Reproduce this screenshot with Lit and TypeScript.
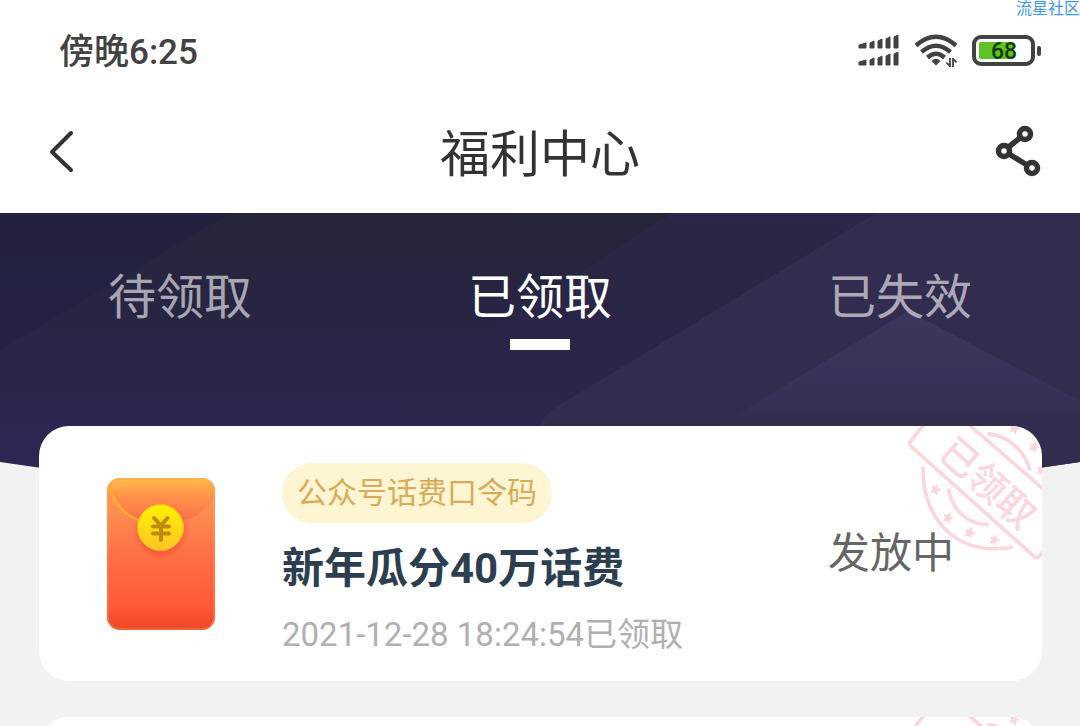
import { LitElement, html, css, svg, nothing } from "lit";
import { customElement, property, state } from "lit/decorators.js";

interface Reward {
  kind: string;
  title: string;
  time: string;
  status: string;
}

const REWARDS: (Reward | null)[] = [
  { kind: "公众号话费口令码", title: "新年瓜分40万话费", time: "2021-12-28 18:24:54已领取", status: "发放中" },
  null,
];

@customElement("status-bar")
class StatusBar extends LitElement {
  static styles = css`
    :host { display: block; position: relative; }
    .bar { display: flex; align-items: center; justify-content: space-between; box-sizing: border-box; height: 100px; padding: 2px 38px 0 59px; color: #424242; }
    .time { font-size: 35px; line-height: 40px; font-weight: 500; padding-top: 4px; }
    .icons { display: flex; align-items: center; gap: 14px; }
    .icons svg { display: block; }
    .mark { position: absolute; top: 0; right: 0; font-size: 16px; line-height: 18px; color: #3f97ee; white-space: nowrap; }
    .level { font: 500 23px Roboto, "Noto Sans CJK SC", sans-serif; }
  `;
  render() {
    const bars = [0, 1, 2, 3, 4];
    return html`
      <div class="bar">
        <span class="time">傍晚6:25</span>
        <div class="icons">
          <svg width="42" height="34" viewBox="0 0 42 34" fill="#424242" stroke="#424242" stroke-linejoin="round" aria-hidden="true">
            ${[15, 32].map((base) => bars.map((i) => {
              const x = i === 0 ? 1 : 4 + i * 8;
              const w = i === 0 ? 7 : 4;
              const top = base - 5 - 2 * i;
              return svg`<path d="M${x} ${top + 1} L${x + w} ${top - 1} V${base - 1} H${x} Z" />`;
            }))}
          </svg>
          <svg width="44" height="34" viewBox="0 0 44 34" fill="none" stroke="#424242" stroke-width="4.4" aria-hidden="true">
            <path d="M2 11.5 Q22 -6 42 11.5" />
            <path d="M7.5 18 Q22 5.500 36.500 18" />
            <path d="M13.500 23.500 Q22 16 30.500 23.500" />
            <path d="M17.500 27 Q22 22.500 26.500 27 L22 31.500 Z" fill="#424242" stroke="none" />
            <path d="M36 24 V33 M36 32.500 L32.500 28.500 M39 33 V24 M39 24.500 L42.500 28.500" stroke-width="1.800" />
          </svg>
          <svg width="70" height="32" viewBox="0 0 70 32" aria-hidden="true">
            <rect x="2" y="2" width="59" height="27" rx="7" fill="none" stroke="#424242" stroke-width="4" />
            <rect x="7" y="7" width="34" height="17" rx="2" fill="#5ec424" />
            <rect x="65" y="11" width="4" height="10" rx="2" fill="#424242" />
            <text class="level" x="32" y="24" text-anchor="middle" fill="#173a0c">68</text>
          </svg>
        </div>
      </div>
      <span class="mark">流星社区</span>
    `;
  }
}

@customElement("red-packet")
class RedPacket extends LitElement {
  static styles = css`
    :host { display: block; }
    svg { display: block; }
  `;
  render() {
    return html`
      <svg width="108" height="152" viewBox="0 0 108 152" aria-hidden="true">
        <defs>
          <linearGradient id="body" x1="0" y1="0" x2="0" y2="1">
            <stop offset="0" stop-color="#ffa04e" />
            <stop offset="0.2" stop-color="#ff9050" />
            <stop offset="0.5" stop-color="#ff7048" />
            <stop offset="0.85" stop-color="#ff5838" />
            <stop offset="0.94" stop-color="#f44c2c" />
            <stop offset="1" stop-color="#ee4a26" />
          </linearGradient>
          <linearGradient id="flap" x1="0" y1="0" x2="0" y2="1">
            <stop offset="0" stop-color="#ffbb4c" />
            <stop offset="0.35" stop-color="#ff964b" />
            <stop offset="1" stop-color="#ff6b46" />
          </linearGradient>
          <linearGradient id="coin" x1="0" y1="0" x2="0" y2="1">
            <stop offset="0" stop-color="#fff200" />
            <stop offset="1" stop-color="#ffc524" />
          </linearGradient>
          <radialGradient id="glow">
            <stop offset="0.75" stop-color="#f4502a" stop-opacity="0.6" />
            <stop offset="1" stop-color="#f4502a" stop-opacity="0" />
          </radialGradient>
          <clipPath id="shape"><rect width="108" height="152" rx="13" /></clipPath>
        </defs>
        <g clip-path="url(#shape)">
          <rect width="108" height="152" fill="url(#body)" />
          <path d="M0 0 H108 V16 C101 36 78 46 54 46 C30 46 7 36 0 12 Z" fill="url(#flap)" />
          <path d="M0 6 C5 28 17 39 34 44 L32 41 C18 36 8 24 3 6 Z" fill="#ffab3a" />
          <rect width="108" height="152" rx="13" fill="none" stroke="#ff9a58" stroke-opacity="0.3" stroke-width="4" />
        </g>
        <circle cx="54" cy="53" r="28" fill="url(#glow)" />
        <circle cx="53.500" cy="49.500" r="23" fill="url(#coin)" stroke="#ffb728" />
        <path d="M47 40 L54 47.500 L60.500 40 M46 48.500 H62 M46 55.500 H62 M54 47.500 V62" fill="none" stroke="#c08a10" stroke-width="4" stroke-linecap="round" />
      </svg>
    `;
  }
}

@customElement("claimed-stamp")
class ClaimedStamp extends LitElement {
  static styles = css`
    :host { display: block; }
    svg { display: block; }
    .word { font: 500 114px "Noto Sans CJK SC", sans-serif; }
  `;
  render() {
    const star = "M0 -18 L5 -6 L17 -5 L8 4 L11 17 L0 11 L-11 17 L-8 4 L-17 -5 L-5 -6 Z";
    const stars = [[137, 222], [175, 307], [239, 352], [313, 374], [432, 95], [373, 40], [455, 165]];
    return html`
      <svg width="140" height="135" viewBox="36 33 420 405" fill="none" stroke="#fbd7db" stroke-width="11" aria-label="已领取" role="img">
        <path d="M102 28 L62 78 Q55 87 64 95 L432 424 Q440 431 447 424 L462 408" />
        <path d="M236 28 L462 224" />
        <path d="M100 155 C92 290 185 430 368 396" />
        <path d="M175 220 C186 285 230 328 296 329" />
        <path d="M292 56 C352 62 404 104 420 166" />
        <g fill="#fbd7db" stroke="none">
          ${stars.map(([x, y]) => svg`<path d=${star} transform="translate(${x} ${y}) rotate(20)" />`)}
          <text class="word" text-anchor="middle" transform="translate(295 203) rotate(42)" y="43">已领取</text>
        </g>
      </svg>
    `;
  }
}

@customElement("reward-card")
class RewardCard extends LitElement {
  @property({ attribute: false }) reward: Reward | null = null;
  static styles = css`
    :host { display: block; }
    .card { position: relative; display: flex; align-items: center; box-sizing: border-box; min-height: 255px; padding: 26px 88px 26px 68px; border-radius: 30px; background: #fff; overflow: hidden; }
    .stamp { position: absolute; top: 0; right: 0; }
    .info { flex: 1; min-width: 0; margin-left: 67px; padding-top: 10px; }
    .kind { display: block; width: fit-content; padding: 0 15px; border-radius: 30px; background: #fef5d3; color: #d9ab58; font-size: 30px; line-height: 60px; }
    .title { margin: 14px 0 0; font-size: 42px; line-height: 64px; font-weight: 700; color: #2c3e50; }
    .time { margin: 14px 0 0; font-size: 33px; line-height: 40px; color: #b0b0b0; }
    .status { position: relative; font-size: 42px; line-height: 60px; color: #666; }
  `;
  render() {
    const r = this.reward;
    return html`
      <article class="card">
        <claimed-stamp class="stamp"></claimed-stamp>
        <red-packet></red-packet>
        ${r
          ? html`
              <div class="info">
                <span class="kind">${r.kind}</span>
                <h2 class="title">${r.title}</h2>
                <p class="time">${r.time}</p>
              </div>
              <span class="status">${r.status}</span>
            `
          : nothing}
      </article>
    `;
  }
}

@customElement("app-root")
class AppRoot extends LitElement {
  @state() private active = 1;
  private tabs = ["待领取", "已领取", "已失效"];
  static styles = css`
    :host { display: block; height: 100vh; overflow: hidden; background: #f2f2f2; font-family: Roboto, "Noto Sans CJK SC", sans-serif; }
    .top { background: #fff; }
    .nav { display: grid; grid-template-columns: 1fr auto 1fr; align-items: center; height: 113px; padding: 0 36px 12px; box-sizing: border-box; }
    .name { margin: 0; padding-top: 8px; font-size: 50px; line-height: 60px; font-weight: 400; color: #333; }
    .icon { padding: 0; border: 0; background: none; }
    .icon svg { display: block; }
    .share { justify-self: end; }
    .back { justify-self: start; }
    .body { position: relative; }
    .hero { position: absolute; inset: 0 0 auto; width: 100%; height: 270px; }
    .tabs { position: relative; display: grid; grid-template-columns: repeat(3, 1fr); height: 213px; }
    .tab { display: flex; flex-direction: column; align-items: center; padding: 50px 0 0; border: 0; background: none; font: inherit; font-size: 48px; line-height: 70px; color: rgba(255, 255, 255, 0.6); }
    .tab.on { color: #fff; }
    .tab.on::after { content: ""; width: 60px; height: 11px; margin-top: 6px; background: #fff; }
    .list { position: relative; display: grid; gap: 36px; padding: 0 38px 0 39px; }
  `;
  render() {
    return html`
      <header class="top">
        <status-bar></status-bar>
        <div class="nav">
          <button class="icon back" aria-label="返回">
            <svg width="50" height="50" viewBox="0 0 50 50" fill="none" stroke="#333" stroke-width="4" stroke-linecap="round" stroke-linejoin="round"><path d="M35 7 L16 26 L35 44" /></svg>
          </button>
          <h1 class="name">福利中心</h1>
          <button class="icon share" aria-label="分享">
            <svg width="50" height="54" viewBox="0 0 50 54" fill="none" stroke="#333" stroke-width="5.500">
              <circle cx="31" cy="10" r="5.500" /><circle cx="10" cy="27" r="5.500" /><circle cx="38" cy="44" r="5.500" />
              <path d="M14 23.500 L26.500 13.500 M15 30 L33 41" />
            </svg>
          </button>
        </div>
      </header>
      <div class="body">
        <svg class="hero" viewBox="0 0 1080 270" preserveAspectRatio="none" aria-hidden="true">
          <defs>
            <linearGradient id="sky" x1="0" y1="0" x2="0" y2="1"><stop offset="0" stop-color="#242638" /><stop offset="0.3" stop-color="#272543" /><stop offset="1" stop-color="#2f2758" /></linearGradient>
            <linearGradient id="peak" x1="0" y1="0" x2="0" y2="1"><stop offset="0" stop-color="#3b365b" /><stop offset="0.5" stop-color="#38335a" /><stop offset="0.9" stop-color="#322d4f" /></linearGradient>
            <linearGradient id="band" x1="0" y1="0" x2="0" y2="1"><stop offset="0" stop-color="#2c2648" /><stop offset="1" stop-color="#2c2648" stop-opacity="0" /></linearGradient>
            <clipPath id="curve"><path d="M0 0 H1080 V249 Q540 330 0 249 Z" /></clipPath>
          </defs>
          <g clip-path="url(#curve)">
            <rect width="1080" height="300" fill="url(#sky)" />
            <path d="M0 0 H230 L0 137 Z" fill="#1f1f45" fill-opacity="0.4" />
            <path d="M672 0 H876 L556 194 L480 213 L350 213 Z" fill="url(#band)" />
            <path d="M876 0 H1080 V300 H540 V213 Q543 203 556 194 Z" fill="#322d4e" />
            <path d="M908 98 L1080 188 V230 H690 Z" fill="url(#peak)" />
          </g>
        </svg>
        <nav class="tabs" role="tablist">
          ${this.tabs.map((t, i) => html`<button class="tab ${i === this.active ? "on" : ""}" role="tab" aria-selected=${i === this.active} @click=${() => (this.active = i)}>${t}</button>`)}
        </nav>
        <main class="list">${REWARDS.map((r) => html`<reward-card .reward=${r}></reward-card>`)}</main>
      </div>
    `;
  }
}
